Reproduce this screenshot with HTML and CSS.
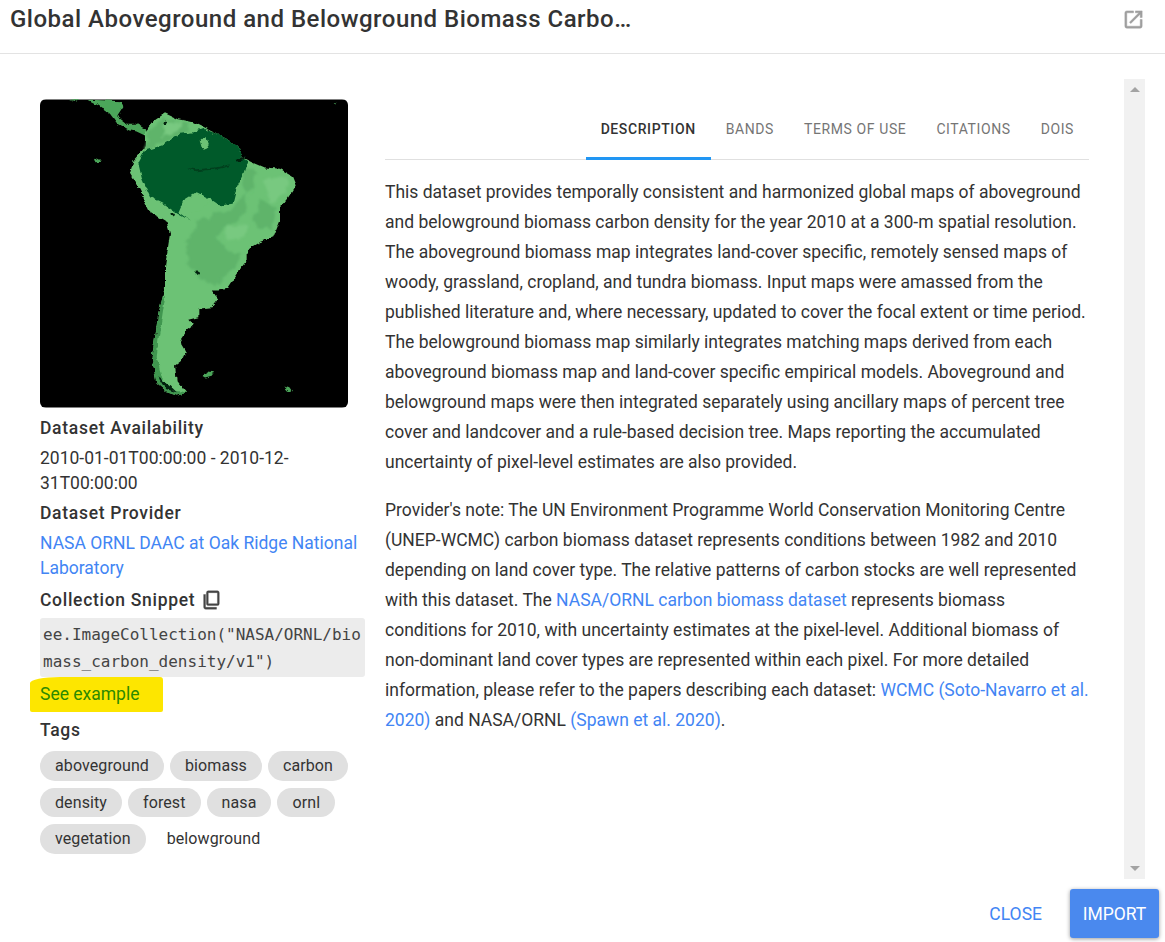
FILE: index.html
```html
<!DOCTYPE html>
<html lang="en">
<head>
  <meta charset="UTF-8" />
  <title>Dataset details</title>
  <link rel="stylesheet" href="styles.css">
</head>
<body>
  <div class="dialog">
    <header class="dialog-head">
      <h1 class="dialog-title">Global Aboveground and Belowground Biomass Carbo…</h1>
      <a class="open-link" href="#" aria-label="Open in new tab">
        <svg width="23" height="23" viewBox="0 0 24 24"><path d="M19 19H5V5h7V3H5a2 2 0 0 0-2 2v14a2 2 0 0 0 2 2h14a2 2 0 0 0 2-2v-7h-2v7zM14 3v2h3.6l-9.8 9.8 1.4 1.4L19 6.4V10h2V3h-7z"/></svg>
      </a>
    </header>

    <div class="dialog-body">
      <div class="dialog-content">
        <aside class="side">
          <svg class="thumb" viewBox="30 27 924 924" role="img" aria-label="Map of South America">
            <defs>
              <filter id="coast" x="-5%" y="-5%" width="110%" height="110%">
                <feTurbulence type="fractalNoise" baseFrequency="0.05" numOctaves="3" seed="4" result="n"/>
                <feDisplacementMap in="SourceGraphic" in2="n" scale="14" xChannelSelector="R" yChannelSelector="G"/>
                <feGaussianBlur stdDeviation="1.2"/>
              </filter>
              <filter id="mottle" x="-5%" y="-5%" width="110%" height="110%">
                <feTurbulence type="fractalNoise" baseFrequency="0.035" numOctaves="4" seed="9" result="n"/>
                <feDisplacementMap in="SourceGraphic" in2="n" scale="30" xChannelSelector="R" yChannelSelector="G"/>
                <feGaussianBlur stdDeviation="3"/>
              </filter>
            </defs>
            <rect x="30" y="27" width="924" height="924" fill="#000"/>
            <g filter="url(#coast)">
              <g fill="#4ca65a">
                <path d="M170,27 L272,32 L280,50 L262,78 L290,100 L318,100 L350,118 L345,135 L318,122 L298,120 L262,100 L240,70 L205,45 Z"/>
                <path d="M120,27 H150 L140,33 Z"/>
                <path d="M192,202 L205,206 L212,214 L196,215 Z"/>
                <path d="M515,855 L535,843 L552,845 L545,856 L525,861 Z"/>
                <path d="M763,888 L778,893 L787,906 L773,900 Z"/>
                <path d="M908,36 L918,34 L918,42 Z"/>
              </g>
              <path fill="#6cc274" d="M345,125 L370,92 L405,68 L440,85 L490,95 L520,110 L560,130 L600,150 L625,170 L635,200 L665,215 L700,230 L750,235 L785,255 L797,285 L775,320 L750,350 L750,390 L730,440 L690,455 L650,480 L650,510 L620,550 L590,595 L565,600 L545,600 L565,625 L545,650 L505,655 L505,680 L475,688 L490,705 L470,720 L450,750 L468,780 L455,810 L435,825 L440,870 L470,905 L440,915 L410,905 L380,880 L365,800 L375,740 L385,670 L405,590 L405,530 L420,430 L410,395 L360,365 L330,300 L300,250 L310,210 L345,170 Z"/>
              <path fill="#3f9650" d="M398,620 L405,620 L396,680 L386,740 L380,800 L395,860 L425,900 L470,905 L440,915 L410,905 L380,880 L365,800 L375,740 L385,670 Z"/>
            </g>
            <g filter="url(#mottle)">
              <g fill="#5eb46a">
                <path d="M355,125 L400,80 L480,105 L470,125 L430,140 L395,165 L345,178 Z"/>
                <path d="M640,225 L680,250 L660,300 L620,340 L600,355 L560,370 L500,395 L475,450 L470,510 L520,575 L560,590 L600,540 L640,490 L590,480 L560,440 L600,400 L650,360 Z"/>
                <path d="M690,330 L740,350 L720,420 L670,400 Z"/>
              </g>
              <g fill="#78c980">
                <path d="M700,265 L775,260 L770,310 L720,340 Z"/>
                <path d="M590,410 L650,400 L640,450 L590,450 Z"/>
                <path d="M410,90 L460,100 L430,130 L395,140 Z"/>
              </g>
            </g>
            <g filter="url(#coast)">
              <path fill="#045a2b" d="M395,165 L450,130 L490,125 L520,115 L560,130 L600,150 L625,170 L635,200 L652,212 L640,250 L620,290 L608,340 L570,345 L540,325 L500,305 L460,330 L445,365 L480,390 L440,368 L400,340 L360,320 L335,262 L325,218 L345,180 Z"/>
              <g fill="#6cc274">
                <path d="M512,150 L526,142 L538,172 L520,178 Z"/>
                <path d="M460,335 L500,312 L540,332 L520,358 L480,368 Z"/>
              </g>
              <g fill="#02200f">
                <ellipse cx="428" cy="373" rx="7" ry="4"/>
                <ellipse cx="500" cy="545" rx="7" ry="5"/>
                <ellipse cx="405" cy="98" rx="4" ry="5"/>
                <path d="M620,205 L645,200 L640,208 L622,210 Z"/>
                <path d="M470,232 L500,236 L560,230 L600,222 L600,227 L560,236 L500,242 Z" fill="#033f1e"/>
                <path d="M385,860 L420,885 L440,905 L405,895 Z"/>
              </g>
            </g>
          </svg>

          <h3 class="side-label">Dataset Availability</h3>
          <p class="side-text">2010-01-01T00:00:00 - 2010-12-31T00:00:00</p>

          <h3 class="side-label">Dataset Provider</h3>
          <p class="side-text"><a href="#">NASA ORNL DAAC at Oak Ridge National Laboratory</a></p>

          <h3 class="side-label snippet-label">Collection Snippet
            <svg class="copy-icon" width="22" height="22" viewBox="0 0 24 24"><path d="M6 6H4v14a2 2 0 0 0 2 2h12v-2H6V6zm3-4a2 2 0 0 0-2 2v12a2 2 0 0 0 2 2h10a2 2 0 0 0 2-2V4a2 2 0 0 0-2-2H9zm0 2h10v12H9V4z"/></svg>
          </h3>
          <code class="snippet">ee.ImageCollection("NASA/ORNL/biomass_carbon_density/v1")</code>
          <a class="see-example" href="#">See example</a>

          <h3 class="side-label tags-label">Tags</h3>
          <div class="tags">
            <span class="tag">aboveground</span>
            <span class="tag">biomass</span>
            <span class="tag">carbon</span>
            <span class="tag">density</span>
            <span class="tag">forest</span>
            <span class="tag">nasa</span>
            <span class="tag">ornl</span>
            <span class="tag">vegetation</span>
            <span class="tag tag-plain">belowground</span>
          </div>
        </aside>

        <main class="details">
          <nav class="tabs">
            <a class="tab tab-active" href="#">Description</a>
            <a class="tab" href="#">Bands</a>
            <a class="tab" href="#">Terms of Use</a>
            <a class="tab" href="#">Citations</a>
            <a class="tab" href="#">DOIs</a>
          </nav>
          <p>This dataset provides temporally consistent and harmonized global maps of aboveground and belowground biomass carbon density for the year 2010 at a 300-m spatial resolution. The aboveground biomass map integrates land-cover specific, remotely sensed maps of woody, grassland, cropland, and tundra biomass. Input maps were amassed from the published literature and, where necessary, updated to cover the focal extent or time period. The belowground biomass map similarly integrates matching maps derived from each aboveground biomass map and land-cover specific empirical models. Aboveground and belowground maps were then integrated separately using ancillary maps of percent tree cover and landcover and a rule-based decision tree. Maps reporting the accumulated uncertainty of pixel-level estimates are also provided.</p>
          <p>Provider's note: The UN Environment Programme World Conservation Monitoring Centre (UNEP-WCMC) carbon biomass dataset represents conditions between 1982 and 2010 depending on land cover type. The relative patterns of carbon stocks are well represented with this dataset. The <a href="#">NASA/ORNL carbon biomass dataset</a> represents biomass conditions for 2010, with uncertainty estimates at the pixel-level. Additional biomass of non-dominant land cover types are represented within each pixel. For more detailed information, please refer to the papers describing each dataset: <a href="#">WCMC (Soto-Navarro et al. 2020)</a> and NASA/ORNL <a href="#">(Spawn et al. 2020)</a>.</p>
        </main>
      </div>

      <div class="scrollbar">
        <span class="arrow arrow-up"></span>
        <span class="arrow arrow-down"></span>
      </div>
    </div>

    <footer class="dialog-foot">
      <button class="btn btn-text">Close</button>
      <button class="btn btn-primary">Import</button>
    </footer>
  </div>
</body>
</html>
```

FILE: styles.css
```css
* {
  box-sizing: border-box;
}
body {
  margin: 0;
  height: 942px;
  overflow: hidden;
  background: #fff;
  font-family: Roboto, "Liberation Sans", sans-serif;
  font-size: 17.5px;
  color: #333;
}
a {
  color: #4285f4;
  text-decoration: none;
}
.dialog {
  display: flex;
  flex-direction: column;
  height: 942px;
}
.dialog-head {
  display: flex;
  justify-content: space-between;
  align-items: center;
  height: 54px;
  padding: 0 20px 15px 10px;
  border-bottom: 1px solid #e3e3e3;
}
.dialog-title {
  margin: 0;
  font-size: 24px;
  font-weight: 500;
  letter-spacing: 0.5px;
  color: #333;
}
.open-link {
  display: flex;
  fill: #9e9e9e;
  stroke: #9e9e9e;
  stroke-width: 0.5;
}
.dialog-body {
  display: flex;
  height: 800px;
  margin-top: 25px;
  padding-right: 20px;
}
.dialog-content {
  display: flex;
  flex: 1;
  padding: 20px 35px 0 40px;
  overflow: hidden;
}
.side {
  flex: none;
  width: 325px;
  margin-right: 20px;
}
.thumb {
  display: block;
  width: 308px;
  height: 309px;
  border-radius: 6px;
  margin-bottom: 7px;
}
.side-label {
  display: flex;
  align-items: center;
  gap: 5px;
  height: 25px;
  margin: 0;
  font-size: 17.5px;
  font-weight: 500;
  letter-spacing: 0.7px;
  color: #333;
}
.side-text {
  margin: 6px 0 4px;
  line-height: 25px;
}
.snippet-label {
  margin-top: 6px;
}
.copy-icon {
  fill: #444;
  stroke: #444;
  stroke-width: 0.4;
}
.snippet {
  display: block;
  margin: 6px 0 0;
  padding: 3px 3px 0;
  height: 59px;
  background: #ececec;
  border-radius: 3px;
  font-family: "DejaVu Sans Mono", monospace;
  font-size: 16px;
  line-height: 27px;
  word-break: break-all;
  color: #444;
}
.see-example {
  display: block;
  position: relative;
  z-index: 0;
  height: 35px;
  line-height: 35px;
  color: #2c8a00;
}
.see-example::before {
  content: "";
  position: absolute;
  z-index: -1;
  left: -10px;
  top: 0;
  width: 133px;
  height: 35px;
  background: #fde600;
  border-radius: 30px 3px 2px 2px / 6px 3px 2px 2px;
}
.tags-label {
  margin: 5px 0 9px;
}
.tags {
  display: flex;
  flex-wrap: wrap;
  gap: 7px 6px;
  width: 320px;
}
.tag {
  height: 29.5px;
  padding: 0 15px;
  border-radius: 15px;
  background: #e0e0e0;
  font-size: 16px;
  line-height: 29.5px;
  letter-spacing: 0.1px;
}
.tag-plain {
  background: none;
}
.details {
  flex: 1;
  line-height: 30px;
}
.details p {
  margin: 0 0 18px;
}
.tabs {
  display: flex;
  justify-content: flex-end;
  height: 61px;
  margin-bottom: 17px;
  border-bottom: 1px solid #e0e0e0;
}
.tab {
  padding: 15px 15px 0;
  border-bottom: 3px solid transparent;
  margin-bottom: -1px;
  font-size: 14px;
  font-weight: 400;
  letter-spacing: 0.6px;
  text-transform: uppercase;
  color: #757575;
}
.tab-active {
  font-weight: 500;
  color: #333;
  border-bottom-color: #2196f3;
}
.scrollbar {
  position: relative;
  flex: none;
  width: 21px;
  background: #f1f1f1;
}
.arrow {
  position: absolute;
  left: 6px;
  border-left: 5px solid transparent;
  border-right: 5px solid transparent;
}
.arrow-up {
  top: 8px;
  border-bottom: 5px solid #a3a3a3;
}
.arrow-down {
  bottom: 8px;
  border-top: 5px solid #a3a3a3;
}
.dialog-foot {
  display: flex;
  justify-content: flex-end;
  align-items: center;
  gap: 15px;
  height: 63px;
  padding: 6px 6px 0 0;
}
.btn {
  height: 49px;
  border: none;
  border-radius: 3px;
  font-family: inherit;
  font-size: 17.5px;
  font-weight: 400;
  text-transform: uppercase;
  color: #4285f4;
  background: none;
  padding: 0 13px;
}
.btn-primary {
  width: 89px;
  padding: 0;
  color: #fff;
  background: #4a89ee;
  box-shadow: 0 1px 4px rgba(0,0,0,0.4);
}
```
